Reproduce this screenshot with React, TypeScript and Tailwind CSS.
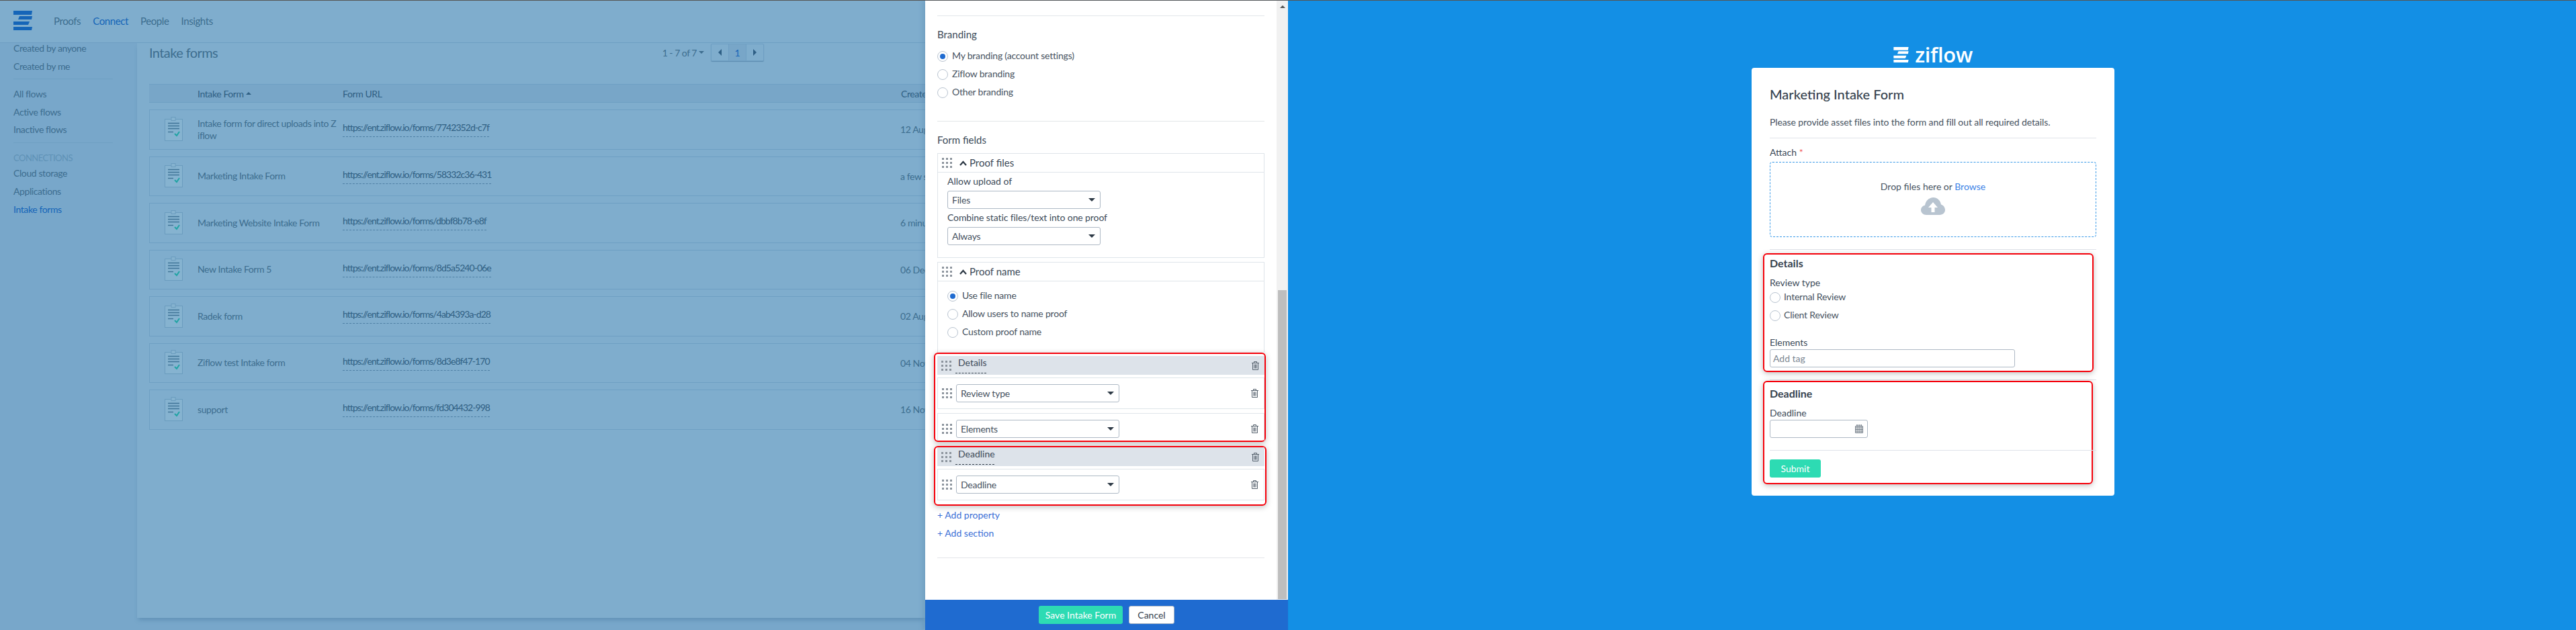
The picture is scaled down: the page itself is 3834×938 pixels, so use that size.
import React from "react";

const Logo = ({ className, fill }: { className: string; fill: string }) => (
  <svg viewBox="0 0 28 29" className={className} fill={fill}>
    <path d="M0 0H28L27 6H0Z" />
    <path d="M9 8H28L27 13H7Z" />
    <path d="M0 16H24L22 21H0Z" />
    <path d="M0 24H28L27 29H0Z" />
  </svg>
);

const Clipboard = () => (
  <svg viewBox="0 0 27 36" className="w-[27px] h-[36px] shrink-0">
    <rect x="0.5" y="3.5" width="26" height="32" fill="#86b3d0" stroke="#6a9cbe" />
    <rect x="10" y="0.5" width="6" height="5" fill="#86b3d0" stroke="#6a9cbe" />
    <path d="M5 9.5H22M5 13.5H22M5 17.5H22" stroke="#3f7396" strokeWidth="1.4" />
    <path d="M5 22.5H13" stroke="#3f7396" strokeWidth="1.4" />
    <path d="M15 25L18 28L22 22" stroke="#1fa3a3" strokeWidth="2" fill="none" />
  </svg>
);

const Dots = ({ className = "" }: { className?: string }) => (
  <svg viewBox="0 0 15 15" className={`w-[15px] h-[15px] shrink-0 ${className}`} fill="#8b939c">
    {[0, 6, 12].map((y) => [0, 6, 12].map((x) => <rect key={`${x}-${y}`} x={x} y={y} width="3" height="3" />))}
  </svg>
);

const Trash = ({ className = "" }: { className?: string }) => (
  <svg viewBox="0 0 11 13" className={`w-[11px] h-[13px] shrink-0 ${className}`} fill="none" stroke="#54606c" strokeWidth="1">
    <path d="M0 2.5H11M3.5 2.5V0.5H7.5V2.5M1.5 2.5V12.5H9.5V2.5M3.8 4.5V10.5M5.5 4.5V10.5M7.2 4.5V10.5" />
  </svg>
);

const Radio = ({ on = false }: { on?: boolean }) => (
  <span className="w-[16px] h-[16px] rounded-full border border-[#b9c4d0] bg-white flex items-center justify-center shrink-0">
    {on && <span className="w-[8px] h-[8px] rounded-full bg-[#1f6bd0]" />}
  </span>
);

const RadioRow = ({ label, on, gap = "gap-[6px]" }: { label: string; on?: boolean; gap?: string }) => (
  <div className={`h-[27px] flex items-center ${gap}`}>
    <Radio on={on} />
    <span className="text-[14px] leading-[16px] text-[#47535f] -mt-[2px] tracking-[-0.2px]">{label}</span>
  </div>
);

const Select = ({ label, w }: { label: string; w: string }) => (
  <div className={`${w} h-[27px] rounded-[3px] border border-[#aeb9c5] bg-white flex items-center justify-between pl-[6px] pr-[7px]`}>
    <span className="text-[14px] text-[#47535f] tracking-[-0.2px]">{label}</span>
    <span className="w-0 h-0 border-x-[5px] border-x-transparent border-t-[5px] border-t-[#2e3a46]" />
  </div>
);

const Chevron = () => (
  <svg viewBox="0 0 11 8" className="w-[11px] h-[8px] shrink-0" fill="none" stroke="#2e3a46" strokeWidth="2.2">
    <path d="M1 7L5.5 2L10 7" />
  </svg>
);

const FieldBar = ({ label, under }: { label: string; under: string }) => (
  <div className="h-[28px] bg-[#dde3ea] flex items-center pl-[6px] pr-[8px] shrink-0">
    <Dots />
    <div className={`ml-[6px] ${under} h-[24px] border-b border-dashed border-[#36424e] pl-[4px] -mt-[1px]`}>
      <span className="text-[14px] leading-[16px] text-[#3c4a58] block">{label}</span>
    </div>
    <Trash className="ml-auto" />
  </div>
);

const FieldRow = ({ label, bottom = true, pb = "pb-[9px]" }: { label: string; bottom?: boolean; pb?: string }) => (
  <div className={`border-t border-x ${bottom ? "border-b" : ""} border-[#dfe5ea] pt-[9px] ${pb} pl-[6px] pr-[8px] flex items-center`}>
    <Dots className="mr-[6px]" />
    <Select label={label} w="w-[243px]" />
    <Trash className="ml-auto" />
  </div>
);

const SideItem = ({ label, active }: { label: string; active?: boolean }) => (
  <div className={`h-[16px] leading-[16px] text-[14px] tracking-[-0.4px] ${active ? "text-[#1565b8]" : "text-[#3d6d8f]"}`}>{label}</div>
);

const rows = [
  { name: "Intake form for direct uploads into Z", name2: "iflow", url: "7742352d-c7f", date: "12 Aug, 2021" },
  { name: "Marketing Intake Form", url: "58332c36-431", date: "a few seconds ago" },
  { name: "Marketing Website Intake Form", url: "dbbf8b78-e8f", date: "6 minutes ago" },
  { name: "New Intake Form 5", url: "8d5a5240-06e", date: "06 Dec, 2021" },
  { name: "Radek form", url: "4ab4393a-d28", date: "02 Aug, 2021" },
  { name: "Ziflow test Intake form", url: "8d3e8f47-170", date: "04 Nov, 2021" },
  { name: "support", url: "fd304432-998", date: "16 Nov, 2021" },
];

const Backdrop = () => (
  <div className="w-[1377px] shrink-0 flex flex-col bg-[#78a7ca] overflow-hidden whitespace-nowrap">
    <div className="h-[63px] shrink-0 bg-[#7fadcd] border-b border-[#6e9fc3] flex items-center pl-[20px]">
      <Logo className="w-[28px] h-[29px] -mt-[3px]" fill="#1565b8" />
      <div className="ml-[32px] flex gap-[18px] text-[15px] tracking-[-0.4px] -mt-[2px] text-[#3d6d8f]">
        <span>Proofs</span>
        <span className="text-[#1565b8]">Connect</span>
        <span>People</span>
        <span>Insights</span>
      </div>
    </div>
    <div className="flex-1 flex min-h-0">
      <div className="w-[204px] shrink-0 pl-[20px] pr-[36px]">
        <div className="flex flex-col gap-[11px]">
          <SideItem label="Created by anyone" />
          <SideItem label="Created by me" />
        </div>
        <div className="h-px bg-[#6e9fc3] mt-[10px]" />
        <div className="flex flex-col gap-[10.5px] mt-[14px]">
          <SideItem label="All flows" />
          <SideItem label="Active flows" />
          <SideItem label="Inactive flows" />
        </div>
        <div className="h-px bg-[#6e9fc3] mt-[11px]" />
        <div className="mt-[14px] h-[16px] leading-[16px] text-[13px] tracking-[-0.5px] text-[#5f92b6]">CONNECTIONS</div>
        <div className="flex flex-col gap-[11px] mt-[7px]">
          <SideItem label="Cloud storage" />
          <SideItem label="Applications" />
          <SideItem label="Intake forms" active />
        </div>
      </div>
      <div className="flex-1 flex flex-col min-w-0">
        <div className="h-[856px] bg-[#7fadcd] pl-[18px] shadow-[0_5px_6px_-2px_rgba(60,110,150,0.4)]">
          <div className="flex items-center h-[26px] mt-px">
            <span className="text-[20px] text-[#3d6d8f] tracking-[-0.6px]">Intake forms</span>
            <div className="ml-auto mr-[240px] flex items-center">
              <span className="text-[14px] text-[#3d6d8f] tracking-[-0.5px]">1 - 7 of 7</span>
              <span className="ml-[3px] w-0 h-0 border-x-[4px] border-x-transparent border-t-[4px] border-t-[#3d6d8f]" />
              <div className="ml-[10px] flex h-[26px] w-[79px] rounded-[2px] border border-[#6e9fc3] shadow-[0_1px_1px_rgba(60,110,150,0.5)]">
                <span className="flex-1 flex items-center justify-center border-r border-[#6e9fc3]">
                  <span className="w-0 h-0 border-y-[5px] border-y-transparent border-r-[5px] border-r-[#2e5f85]" />
                </span>
                <span className="flex-1 flex items-center justify-center border-r border-[#6e9fc3] bg-[#78a6c8] text-[14px] text-[#1565b8]">1</span>
                <span className="flex-1 flex items-center justify-center">
                  <span className="w-0 h-0 border-y-[5px] border-y-transparent border-l-[5px] border-l-[#2e5f85]" />
                </span>
              </div>
            </div>
          </div>
          <div className="mt-[34px] h-[28px] bg-[#78a6c8] border-y border-[#6e9fc3] flex items-center text-[14px] tracking-[-0.4px] text-[#2f5f83]">
            <div className="w-[72px] shrink-0" />
            <div className="w-[216px] shrink-0 flex items-center gap-[3px]">
              Intake Form
              <span className="w-0 h-0 border-x-[4px] border-x-transparent border-b-[4px] border-b-[#2f5f83]" />
            </div>
            <div className="w-[831px] shrink-0">Form URL</div>
            <div>Created</div>
          </div>
          <div className="mt-[10px] flex flex-col gap-[10px]">
            {rows.map((r) => (
              <div key={r.url} className="h-[59.5px] border border-[#6e9fc3] border-r-0 flex items-center text-[14px] text-[#3d6d8f]">
                <div className="w-[71px] shrink-0 pl-[22px] -mt-[2px]">
                  <Clipboard />
                </div>
                <div className="w-[216px] shrink-0 leading-[18px] tracking-[-0.4px]">
                  {r.name}
                  {r.name2 && (
                    <>
                      <br />
                      {r.name2}
                    </>
                  )}
                </div>
                <div className="w-[830px] shrink-0 -mt-[2px]">
                  <span className="inline-block h-[24px] leading-[20px] border-b border-dashed border-[#4f80a5] tracking-[-0.95px] text-[14px] text-[#2f5f83]">
                    https://ent.ziflow.io/forms/{r.url}
                  </span>
                </div>
                <div className="tracking-[-0.4px]">{r.date}</div>
              </div>
            ))}
          </div>
        </div>
      </div>
    </div>
  </div>
);

const Drawer = () => (
  <div className="w-[540px] shrink-0 flex flex-col bg-white whitespace-nowrap shadow-[-4px_0_6px_rgba(60,110,150,0.2)] z-10">
    <div className="h-[892px] flex shrink-0 overflow-hidden">
      <div className="w-[523px] shrink-0 pl-[18px] pr-[18px]">
        <div className="h-px bg-[#e3e6e9] mt-[22px]" />
        <div className="mt-[17px] h-[20px] leading-[20px] text-[15px] text-[#3c4a58]">Branding</div>
        <div className="mt-[9px]">
          <RadioRow label="My branding (account settings)" on />
          <RadioRow label="Ziflow branding" />
          <RadioRow label="Other branding" />
        </div>
        <div className="h-px bg-[#e3e6e9] mt-[29px]" />
        <div className="mt-[17px] h-[20px] leading-[20px] text-[15px] text-[#3c4a58]">Form fields</div>
        <div className="mt-[10px] border border-[#dfe5ea] pb-[18px]">
          <div className="h-[28px] border-b border-[#dfe5ea] flex items-center pl-[6px]">
            <Dots />
            <span className="ml-[11px]"><Chevron /></span>
            <span className="ml-[4px] text-[15px] text-[#3c4a58]">Proof files</span>
          </div>
          <div className="pl-[14px] pt-[5px]">
            <div className="h-[16px] leading-[16px] text-[14px] text-[#3c4a58]">Allow upload of</div>
            <div className="mt-[6px]"><Select label="Files" w="w-[228px]" /></div>
            <div className="mt-[5px] h-[16px] leading-[16px] text-[14px] text-[#3c4a58] tracking-[-0.1px]">Combine static files/text into one proof</div>
            <div className="mt-[6px]"><Select label="Always" w="w-[228px]" /></div>
          </div>
        </div>
        <div className="mt-[6px] border-x border-t border-[#dfe5ea] pb-[17px]">
          <div className="h-[28px] border-b border-[#dfe5ea] flex items-center pl-[6px]">
            <Dots />
            <span className="ml-[11px]"><Chevron /></span>
            <span className="ml-[4px] text-[15px] text-[#3c4a58]">Proof name</span>
          </div>
          <div className="pl-[14px] pt-[8px]">
            <RadioRow label="Use file name" on />
            <RadioRow label="Allow users to name proof" />
            <RadioRow label="Custom proof name" />
          </div>
        </div>
        <div className="-ml-[5px] -mr-[2px] border-2 border-[#f5000a] rounded-[6px] pl-[3px] pt-[3px] shadow-[0_2px_8px_rgba(0,0,0,0.25)]">
          <FieldBar label="Details" under="w-[46px]" />
          <div className="mt-[4px]"><FieldRow label="Review type" /></div>
          <div className="mt-[6px]"><FieldRow label="Elements" bottom={false} pb="pb-[4px]" /></div>
        </div>
        <div className="mt-[6px] -ml-[5px] -mr-[3px] border-2 border-[#f5000a] rounded-[6px] pl-[3px] pr-px pb-[6px] shadow-[0_2px_8px_rgba(0,0,0,0.25)]">
          <FieldBar label="Deadline" under="w-[58px]" />
          <div className="mt-[4px]"><FieldRow label="Deadline" /></div>
        </div>
        <div className="mt-[6px] h-[16px] leading-[16px] text-[14px] text-[#3b6fd6]">+ Add property</div>
        <div className="mt-[11px] h-[16px] leading-[16px] text-[14px] text-[#3b6fd6]">+ Add section</div>
        <div className="h-px bg-[#e3e6e9] mt-[28px]" />
      </div>
      <div className="w-[17px] shrink-0 bg-[#f1f1f1] flex flex-col items-center">
        <span className="mt-[7px] w-0 h-0 border-x-[4px] border-x-transparent border-b-[4px] border-b-[#505050]" />
        <div className="mt-[420px] w-[13px] h-[460px] bg-[#bebebe]" />
      </div>
    </div>
    <div className="flex-1 bg-[#1f6bd0] flex items-center justify-center gap-[9px]">
      <span className="w-[125px] h-[27px] rounded-[3px] bg-[#2ddbb3] text-white text-[14px] flex items-center justify-center">Save Intake Form</span>
      <span className="w-[68px] h-[27px] rounded-[3px] bg-white border border-[#aeb9c5] text-[#36424e] text-[14px] flex items-center justify-center">Cancel</span>
    </div>
  </div>
);

const Cloud = () => (
  <svg viewBox="0 0 36 26" className="w-[36px] h-[26px] mx-auto">
    <path d="M8 26C3.5 26 0 22.8 0 18.8 0 15.2 2.6 12.4 6 11.8 7 5 12.2 0 18.4 0 24.4 0 29 4.4 30 10.4 33.6 11.6 36 14.8 36 18.6 36 22.8 32.6 26 28 26Z" fill="#b8c4d0" />
    <path d="M18 7L25 15H20.5V22H15.5V15H11Z" fill="white" />
  </svg>
);

const Calendar = () => (
  <svg viewBox="0 0 12 13" className="w-[12px] h-[13px]" fill="none" stroke="#66727e" strokeWidth="0.9">
    <path d="M0.5 2.5H11.5V12.5H0.5ZM0.5 5H11.5M0.5 7.5H11.5M0.5 10H11.5M3 2.5V12.5M6 2.5V12.5M9 2.5V12.5" />
    <path d="M3 0V3M6 0V3M9 0V3" strokeWidth="1.4" />
  </svg>
);

const PublicForm = () => (
  <div className="flex-1 bg-[#138fe5] flex flex-col items-center pl-[3px] whitespace-nowrap">
    <div className="mt-[68px] h-[24px] flex items-center">
      <Logo className="w-[23px] h-[23px]" fill="white" />
      <span className="ml-[9px] text-[31px] leading-[24px] font-semibold text-white tracking-[-0.3px] font-['Open_Sans',sans-serif]">ziflow</span>
    </div>
    <div className="mt-[8px] w-[540px] h-[637px] bg-white rounded-[4px] px-[27px] pt-[26px]">
      <div className="h-[26px] leading-[26px] text-[20px] font-medium text-[#36424e]">Marketing Intake Form</div>
      <div className="mt-[21px] h-[16px] leading-[16px] text-[14px] text-[#47535f] tracking-[-0.1px]">Please provide asset files into the form and fill out all required details.</div>
      <div className="h-px bg-[#dfe3ea] mt-[15px]" />
      <div className="mt-[13px] h-[16px] leading-[16px] text-[14px] text-[#3c4a58]">Attach <span className="text-[#f15b5b]">*</span></div>
      <div className="mt-[6px] h-[112px] rounded-[4px] border border-dashed border-[#3a9ae8] pt-[28px] text-center">
        <div className="h-[16px] leading-[16px] text-[14px] text-[#47535f]">Drop files here or <span className="text-[#3b82e6]">Browse</span></div>
        <div className="mt-[8px]"><Cloud /></div>
      </div>
      <div className="h-px bg-[#dfe3ea] mt-[18px]" />
      <div className="mt-[5px] -ml-[10px] w-[492px] border-2 border-[#f5000a] rounded-[6px] pl-[8px] pt-[4px] pb-[5px] shadow-[0_2px_8px_rgba(0,0,0,0.25)]">
        <div className="h-[18px] leading-[18px] text-[16px] font-bold text-[#36424e]">Details</div>
        <div className="mt-[12px] h-[16px] leading-[16px] text-[14px] text-[#3c4a58]">Review type</div>
        <RadioRow label="Internal Review" gap="gap-[5px]" />
        <RadioRow label="Client Review" gap="gap-[5px]" />
        <div className="mt-[19px] h-[16px] leading-[16px] text-[14px] text-[#3c4a58]">Elements</div>
        <div className="mt-[2px] w-[365px] h-[27px] rounded-[3px] border border-[#aeb9c5] flex items-center pl-[4px] text-[14px] text-[#7b8691]">Add tag</div>
      </div>
      <div className="h-px bg-[#dfe3ea] mt-[11px]" />
      <div className="mt-px -ml-[10px] w-[491px] border-2 border-[#f5000a] rounded-[6px] pl-[8px] pt-[8px] pb-[8px] shadow-[0_2px_8px_rgba(0,0,0,0.25)]">
        <div className="h-[18px] leading-[18px] text-[16px] font-bold text-[#36424e]">Deadline</div>
        <div className="mt-[12px] h-[16px] leading-[16px] text-[14px] text-[#3c4a58]">Deadline</div>
        <div className="mt-[2px] w-[146px] h-[27px] rounded-[3px] border border-[#aeb9c5] flex items-center justify-end pr-[6px]"><Calendar /></div>
        <div className="h-px bg-[#dfe3ea] mt-[18px] w-[486px]" />
        <div className="mt-[13px] w-[76px] h-[27px] rounded-[3px] bg-[#2ddbb3] text-white text-[14px] flex items-center justify-center">Submit</div>
      </div>
    </div>
  </div>
);

export default function App() {
  return (
    <div className="w-[3834px] h-[938px] flex flex-col overflow-hidden font-['Lato',sans-serif]">
      <div className="h-px bg-[#555555] shrink-0" />
      <div className="flex-1 flex min-h-0">
        <Backdrop />
        <Drawer />
        <PublicForm />
      </div>
    </div>
  );
}
